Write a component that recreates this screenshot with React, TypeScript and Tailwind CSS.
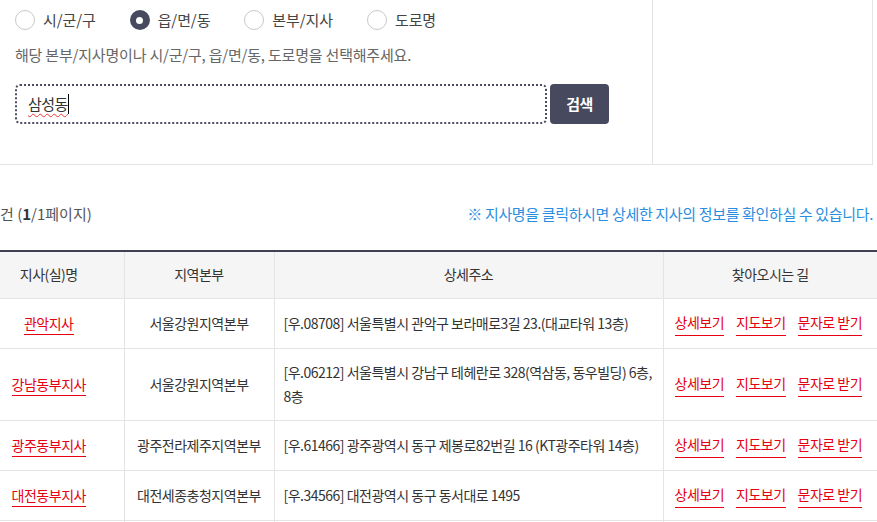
import React from "react";

const rows = [
  {
    name: "관악지사",
    region: "서울강원지역본부",
    addr: "[우.08708] 서울특별시 관악구 보라매로3길 23.(대교타워 13층)",
  },
  {
    name: "강남동부지사",
    region: "서울강원지역본부",
    addr: "[우.06212] 서울특별시 강남구 테헤란로 328(역삼동, 동우빌딩) 6층, 8층",
  },
  {
    name: "광주동부지사",
    region: "광주전라제주지역본부",
    addr: "[우.61466] 광주광역시 동구 제봉로82번길 16 (KT광주타워 14층)",
  },
  {
    name: "대전동부지사",
    region: "대전세종충청지역본부",
    addr: "[우.34566] 대전광역시 동구 동서대로 1495",
  },
  { name: "", region: "", addr: "" },
];

function Radio({ label, checked }: { label: string; checked?: boolean }) {
  return (
    <label className="flex items-center gap-[8px]">
      {checked ? (
        <span className="w-[20px] h-[20px] rounded-full bg-[#474a5e] flex items-center justify-center">
          <span className="w-[7px] h-[7px] rounded-full bg-white" />
        </span>
      ) : (
        <span className="w-[20px] h-[20px] rounded-full border border-[#c8c8c8] bg-white" />
      )}
      <span className="text-[15px] tracking-[-0.1px] text-[#444]">{label}</span>
    </label>
  );
}

function RedLink({ children }: { children: React.ReactNode }) {
  return <a className="text-[#e60012] border-b border-[#e60012] pb-[1px] cursor-pointer">{children}</a>;
}

export default function App() {
  return (
    <div
      className="w-[877px] h-[522px] overflow-hidden bg-white text-[#333] tracking-[-0.5px]"
      style={{ fontFamily: '"Noto Sans CJK KR", "Noto Sans", sans-serif' }}
    >
      {/* 검색 영역 */}
      <div className="flex w-[873px] h-[165px] border-b border-r border-[#e4e4e4]">
        <div className="w-[653px] border-r border-[#e4e4e4] pl-[15px] pt-[10px]">
          <div className="flex items-center gap-[34px] h-[20px]">
            <Radio label="시/군/구" />
            <Radio label="읍/면/동" checked />
            <Radio label="본부/지사" />
            <Radio label="도로명" />
          </div>
          <p className="mt-[14px] text-[15px] leading-[22px] tracking-[-0.2px] text-[#666]">
            해당 본부/지사명이나 시/군/구, 읍/면/동, 도로명을 선택해주세요.
          </p>
          <div className="mt-[18px] flex gap-[3px]">
            <div className="w-[532px] h-[40px] rounded-[5px] border-2 border-dotted border-[#4a4d60] flex items-center pl-[11px]">
              <span className="text-[15px] text-[#333] underline decoration-wavy decoration-[#e33] decoration-1 underline-offset-[3px]">
                삼성동
              </span>
              <span className="w-[1px] h-[20px] bg-black" />
            </div>
            <button className="w-[59px] h-[40px] rounded-[4px] bg-[#474a5e] text-white text-[15px] font-bold">
              검색
            </button>
          </div>
        </div>
        <div className="flex-1" />
      </div>

      {/* 결과 정보 */}
      <div className="w-[873px] flex justify-between items-center pt-[39px] pb-[26px] text-[15px] leading-[20px] tracking-[-0.35px]">
        <span className="text-[#555] tracking-[0px]">
          건 (<b className="text-[#333]">1</b>/1페이지)
        </span>
        <span className="text-[#2a8ee0]">※ 지사명을 클릭하시면 상세한 지사의 정보를 확인하실 수 있습니다.</span>
      </div>

      {/* 결과 테이블 */}
      <table className="ml-[-26px] w-[903px] table-fixed border-collapse border-t-2 border-[#3f4152] text-[14px]">
        <colgroup>
          <col className="w-[150px]" />
          <col className="w-[150px]" />
          <col className="w-[389px]" />
          <col className="w-[214px]" />
        </colgroup>
        <thead>
          <tr className="bg-[#f5f5f5] h-[47px]">
            <th className="font-normal border-r border-b border-[#e4e4e4]">지사(실)명</th>
            <th className="font-normal border-r border-b border-[#e4e4e4]">지역본부</th>
            <th className="font-normal border-r border-b border-[#e4e4e4]">상세주소</th>
            <th className="font-normal border-b border-[#e4e4e4]">찾아오시는 길</th>
          </tr>
        </thead>
        <tbody>
          {rows.map((r, i) => (
            <tr key={i} className="leading-[24px]">
              <td className="text-center py-[11.5px] border-r border-b border-[#e4e4e4]">
                {r.name && <RedLink>{r.name}</RedLink>}
              </td>
              <td className="text-center py-[11.5px] border-r border-b border-[#e4e4e4]">{r.region}</td>
              <td className="py-[11.5px] pl-[9px] pr-[8px] border-r border-b border-[#e4e4e4]">{r.addr}</td>
              <td className="py-[11.5px] pl-[11px] border-b border-[#e4e4e4]">
                {r.name && (
                  <div className="flex gap-[12px]">
                    <RedLink>상세보기</RedLink>
                    <RedLink>지도보기</RedLink>
                    <RedLink>문자로 받기</RedLink>
                  </div>
                )}
              </td>
            </tr>
          ))}
        </tbody>
      </table>
    </div>
  );
}
